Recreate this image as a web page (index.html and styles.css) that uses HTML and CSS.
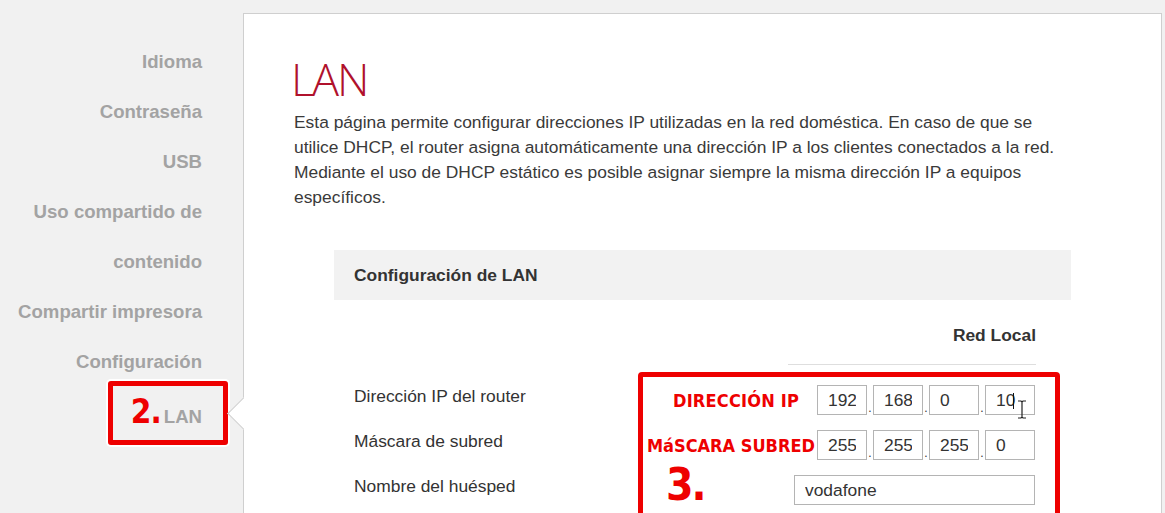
FILE: index.html
```html
<!DOCTYPE html>
<html lang="es">
<head>
    <meta charset="UTF-8">
    <meta name="viewport" content="width=device-width, initial-scale=1.0">
    <title>LAN - Configuración</title>
    <link rel="stylesheet" href="styles.css">
</head>
<body>
    <div class="page">
        <nav class="sidebar">
            <a class="nav-item">Idioma</a>
            <a class="nav-item">Contraseña</a>
            <a class="nav-item">USB</a>
            <a class="nav-item">Uso compartido de contenido</a>
            <a class="nav-item">Compartir impresora</a>
            <a class="nav-item">Configuración</a>
            <a class="nav-item active"><span class="step">2.</span>LAN</a>
        </nav>

        <main class="panel">
            <h1 class="title">LAN</h1>
            <p class="intro">Esta página permite configurar direcciones IP utilizadas en la red doméstica. En caso de que se utilice DHCP, el router asigna automáticamente una dirección IP a los clientes conectados a la red. Mediante el uso de DHCP estático es posible asignar siempre la misma dirección IP a equipos específicos.</p>

            <section class="config">
                <div class="config-header">Configuración de LAN</div>

                <div class="column-title">Red Local</div>

                <div class="form">
                    <label class="form-label">Dirección IP del router</label>
                    <div class="ip-group">
                        <input class="ip-box" type="text" value="192" readonly>
                        <span class="ip-dot">.</span>
                        <input class="ip-box" type="text" value="168" readonly>
                        <span class="ip-dot">.</span>
                        <input class="ip-box" type="text" value="0" readonly>
                        <span class="ip-dot">.</span>
                        <div class="ip-focus">
                            <input class="ip-box" type="text" value="10" readonly>
                            <span class="caret"></span>
                            <svg class="ibeam" width="10" height="19" viewBox="0 0 10 19">
                                <path d="M1 1h3l1 1 1-1h3M5 2v15M1 18h3l1-1 1 1h3" fill="none" stroke="#222" stroke-width="1.2"/>
                            </svg>
                        </div>
                    </div>

                    <label class="form-label">Máscara de subred</label>
                    <div class="ip-group">
                        <input class="ip-box" type="text" value="255" readonly>
                        <span class="ip-dot">.</span>
                        <input class="ip-box" type="text" value="255" readonly>
                        <span class="ip-dot">.</span>
                        <input class="ip-box" type="text" value="255" readonly>
                        <span class="ip-dot">.</span>
                        <input class="ip-box" type="text" value="0" readonly>
                    </div>

                    <label class="form-label">Nombre del huésped</label>
                    <div class="host-field">
                        <input class="host-box" type="text" value="vodafone" readonly>
                    </div>
                </div>

                <!-- tutorial annotation drawn over the form -->
                <div class="annotation">
                    <span class="note note-ip">DIRECCIÓN IP</span>
                    <span class="note note-mask">MáSCARA SUBRED</span>
                    <span class="note note-step">3.</span>
                </div>
            </section>
        </main>
    </div>
</body>
</html>
```

FILE: styles.css
```css
*,
*::before,
*::after {
    margin: 0;
    padding: 0;
    box-sizing: border-box;
}

html, body {
    height: 100%;
    overflow: hidden;
}

body {
    background-color: #f1f1f1;
    color: #333;
    font-family: 'Liberation Sans', Arial, sans-serif;
}

.page {
    display: flex;
    align-items: flex-start;
}

/* Sidebar */

.sidebar {
    width: 243px;
    flex-shrink: 0;
    padding: 37px 41px 0 10px;
    display: flex;
    flex-direction: column;
    align-items: flex-end;
}

.nav-item {
    display: block;
    text-align: right;
    font-size: 18.6px;
    font-weight: bold;
    line-height: 50px;
    color: #a3a3a3;
    max-width: 190px;
}

.nav-item.active {
    position: relative;
}

.nav-item.active::before {
    content: "";
    position: absolute;
    right: -26px;
    top: -6px;
    width: 120px;
    height: 64px;
    border: 5px solid #ee0000;
    border-radius: 3px;
    box-shadow: 0 0 0 2px #fff;
}

.step {
    font-family: 'DejaVu Sans', sans-serif;
    font-stretch: condensed;
    font-size: 33px;
    font-weight: bold;
    color: #ee0000;
    margin-right: 3px;
    letter-spacing: -1px;
}

/* Main panel */

.panel {
    position: relative;
    flex: 0 0 919px;
    height: 700px;
    margin-top: 13px;
    background-color: #fff;
    border: 1px solid #cfcfcf;
    padding: 37px 50px 0 50px;
}

.panel::before {
    content: "";
    position: absolute;
    left: -12px;
    top: 388px;
    width: 23px;
    height: 23px;
    background-color: #fff;
    border-left: 1px solid #cfcfcf;
    border-bottom: 1px solid #cfcfcf;
    transform: rotate(45deg);
}

.title {
    font-family: 'Open Sans', sans-serif;
    font-weight: 300;
    font-size: 45px;
    line-height: 56px;
    letter-spacing: -2px;
    color: #b0112c;
    margin: 0 0 3px -3px;
}

.intro {
    font-size: 17.4px;
    line-height: 25px;
    color: #3a3a3a;
    max-width: 780px;
}

/* Configuration block */

.config {
    position: relative;
    width: 737px;
    margin: 40px 0 0 40px;
}

.config-header {
    background-color: #f2f2f2;
    height: 50px;
    line-height: 50px;
    padding-left: 20px;
    font-size: 17.4px;
    font-weight: bold;
    color: #333;
}

.column-title {
    width: 248px;
    margin: 22px 35px 0 auto;
    padding-bottom: 16px;
    border-bottom: 1px solid #dedede;
    text-align: right;
    font-size: 17.4px;
    font-weight: bold;
    color: #333;
    line-height: 26px;
}

.form {
    display: grid;
    grid-template-columns: 1fr auto;
    row-gap: 15px;
    align-items: center;
    padding: 20px 36px 0 20px;
}

.form-label {
    font-size: 17.4px;
    color: #333;
    margin-top: -8px;
}

.ip-group {
    justify-self: end;
    display: flex;
    align-items: flex-end;
    height: 30px;
}

.ip-box,
.host-box {
    display: block;
    height: 30px;
    border: 1px solid #b4b4b4;
    font-family: 'Liberation Sans', Arial, sans-serif;
    font-size: 17.4px;
    color: #333;
    padding: 0 10px;
    outline: none;
    background: #fff;
}

.ip-box {
    width: 50px;
}

.ip-dot {
    width: 6px;
    text-align: center;
    font-size: 12px;
    line-height: 14px;
    color: #333;
}

.ip-focus {
    position: relative;
}

.caret {
    position: absolute;
    left: 28px;
    top: 8px;
    width: 1px;
    height: 16px;
    background-color: #111;
}

.ibeam {
    position: absolute;
    left: 32px;
    top: 15px;
}

.host-field {
    display: flex;
    justify-content: flex-end;
}

.host-box {
    width: 241px;
}

/* Annotation overlay */

.annotation {
    position: absolute;
    left: 304px;
    top: 122px;
    width: 422px;
    height: 160px;
    border: 5px solid #ee0000;
    border-radius: 4px;
    box-shadow: 0 0 0 2px #fff;
}

.note {
    position: absolute;
    font-family: 'DejaVu Sans', sans-serif;
    font-stretch: condensed;
    font-weight: bold;
    color: #ee0000;
    white-space: nowrap;
}

.note-ip {
    left: 30px;
    top: 13px;
    font-size: 18px;
    letter-spacing: 0.2px;
}

.note-mask {
    left: 4px;
    top: 58px;
    font-size: 18px;
}

.note-step {
    left: 23px;
    top: 82px;
    font-size: 44px;
    letter-spacing: -2px;
}
```
